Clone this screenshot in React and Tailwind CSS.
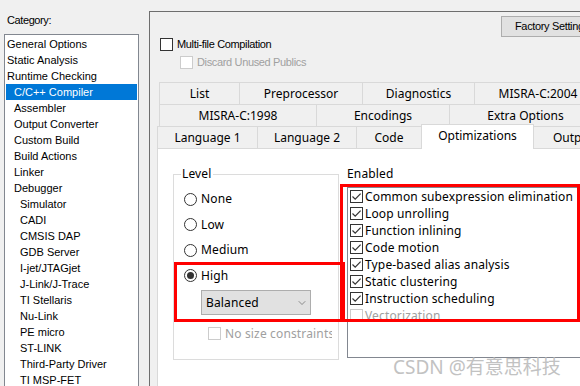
import React from "react";
import { ChevronDown } from "lucide-react";

const cats = [
  ["General Options", 0],
  ["Static Analysis", 0],
  ["Runtime Checking", 0],
  ["C/C++ Compiler", 1, true],
  ["Assembler", 1],
  ["Output Converter", 1],
  ["Custom Build", 1],
  ["Build Actions", 1],
  ["Linker", 1],
  ["Debugger", 1],
  ["Simulator", 2],
  ["CADI", 2],
  ["CMSIS DAP", 2],
  ["GDB Server", 2],
  ["I-jet/JTAGjet", 2],
  ["J-Link/J-Trace", 2],
  ["TI Stellaris", 2],
  ["Nu-Link", 2],
  ["PE micro", 2],
  ["ST-LINK", 2],
  ["Third-Party Driver", 2],
  ["TI MSP-FET", 2],
];

const indent = ["pl-[1px]", "pl-[8px]", "pl-[14px]"];

function Check({ checked, disabled }) {
  return (
    <span
      className={`w-[13px] h-[13px] border ${
        disabled ? "border-[#cccccc]" : "border-[#333333]"
      } bg-white flex items-center justify-center shrink-0`}
    >
      {checked && (
        <svg width="11" height="11" viewBox="0 0 11 11">
          <path d="M1.5 5.5 L4.2 8.2 L9.6 2.6" stroke="#333333" strokeWidth="1.2" fill="none" />
        </svg>
      )}
    </span>
  );
}

function Radio({ checked }) {
  return (
    <span className="w-[13px] h-[13px] rounded-full border border-[#333333] bg-white flex items-center justify-center shrink-0">
      {checked && <span className="w-[7px] h-[7px] rounded-full bg-[#333333]" />}
    </span>
  );
}

function Tab({ children, w, first, selected }) {
  return (
    <div
      className={`${w} shrink-0 border border-[#d9d9d9] flex items-center justify-center whitespace-nowrap ${
        first ? "" : "-ml-px"
      } ${selected ? "h-[25px] border-b-0 bg-white relative z-10 pb-[2px]" : "h-[23px] bg-[#f0f0f0]"}`}
    >
      {children}
    </div>
  );
}

const enabled = [
  ["Common subexpression elimination", true],
  ["Loop unrolling", true],
  ["Function inlining", true],
  ["Code motion", true],
  ["Type-based alias analysis", true],
  ["Static clustering", true],
  ["Instruction scheduling", true],
  ["Vectorization", false],
];

export default function App() {
  return (
    <div className="w-[580px] h-[386px] bg-[#f0f0f0] overflow-hidden relative flex text-black font-['Liberation_Sans',Arial,sans-serif]">
      {/* Left column */}
      <div className="w-[149px] shrink-0 flex flex-col">
        <div className="shrink-0 pl-[7px] pt-[13px] h-[34px] text-[11px] leading-[14px] tracking-[-0.4px]">
          Category:
        </div>
        <div className="ml-[4px] w-[135px] flex-1 border border-[#828790] bg-white pt-[1px] px-[1px] text-[11px]">
          {cats.map(([name, lvl, sel]) => (
            <div
              key={name}
              className={`h-[16px] leading-[16px] whitespace-nowrap ${indent[lvl]} ${
                sel ? "bg-[#0078d7] text-white" : ""
              }`}
            >
              {name}
            </div>
          ))}
        </div>
      </div>

      {/* Right panel */}
      <div className="w-[470px] shrink-0 mt-[11px] border-l border-t border-[#6e6e6e] flex flex-col">
        <div className="shrink-0 pl-[351px] pt-[4px] text-[11px] tracking-[-0.35px]">
          <div className="w-[100px] h-[21px] border border-[#adadad] bg-[#e1e1e1] flex items-center pl-[13px] whitespace-nowrap">
            Factory Settings
          </div>
        </div>
        <div className="shrink-0 ml-[10px] mt-[1px] h-[13px] flex items-center gap-[4px] text-[11px] tracking-[-0.35px] whitespace-nowrap">
          <Check />
          <span>Multi-file Compilation</span>
        </div>
        <div className="shrink-0 ml-[30px] mt-[5px] h-[13px] flex items-center gap-[4px] text-[11px] tracking-[-0.35px] text-[#a0a0a0] whitespace-nowrap">
          <Check disabled />
          <span>Discard Unused Publics</span>
        </div>

        {/* Tabs */}
        <div className="ml-[7px] mt-[13px] flex flex-col flex-1 font-['Noto_Sans',sans-serif] text-[12px]">
          <div className="shrink-0 ml-[2px] flex">
            <Tab w="w-[81px]" first>List</Tab>
            <Tab w="w-[124px]">Preprocessor</Tab>
            <Tab w="w-[113px]">Diagnostics</Tab>
            <Tab w="w-[128px]">MISRA-C:2004</Tab>
          </div>
          <div className="shrink-0 ml-[2px] -mt-px flex">
            <Tab w="w-[158px]" first>MISRA-C:1998</Tab>
            <Tab w="w-[134px]">Encodings</Tab>
            <Tab w="w-[153px]">Extra Options</Tab>
          </div>
          <div className="shrink-0 -mt-px flex items-end h-[23px]">
            <Tab w="w-[101px]" first>Language 1</Tab>
            <Tab w="w-[100px]">Language 2</Tab>
            <Tab w="w-[66px]">Code</Tab>
            <Tab w="w-[113px]" selected>Optimizations</Tab>
            <Tab w="w-[80px]">Output</Tab>
          </div>

          {/* Content */}
          <div className="-mt-px flex-1 bg-white border-l border-t border-[#d9d9d9] flex pl-[15px] pt-[17px] gap-[8px] tracking-[0.15px]">
            <fieldset className="w-[166px] h-[194px] border border-[#dcdcdc] pl-[10px] pt-[4px] shrink-0">
              <legend className="-ml-[3px] px-[1px] leading-[16px]">Level</legend>
              <div className="flex flex-col">
                <div className="h-[26px] flex items-center gap-[4px]">
                  <Radio />
                  <span>None</span>
                </div>
                <div className="h-[25px] flex items-center gap-[4px]">
                  <Radio />
                  <span>Low</span>
                </div>
                <div className="h-[26px] flex items-center gap-[4px]">
                  <Radio />
                  <span>Medium</span>
                </div>
                <div className="h-[25px] flex items-center gap-[4px]">
                  <Radio checked />
                  <span>High</span>
                </div>
                <div className="ml-[17px] mt-[2px] w-[110px] h-[25px] border border-[#adadad] bg-[#e1e1e1] flex items-center justify-between pl-[4px] pr-[2px]">
                  <span>Balanced</span>
                  <ChevronDown size={12} strokeWidth={1} color="#333333" />
                </div>
                <div className="ml-[24px] mt-[12px] w-[124px] h-[13px] flex items-center gap-[4px] overflow-hidden whitespace-nowrap text-[#a0a0a0]">
                  <Check disabled />
                  <span>No size constraints</span>
                </div>
              </div>
            </fieldset>

            <div className="flex flex-col shrink-0">
              <div className="leading-[16px]">Enabled</div>
              <div className="mt-[5px] w-[240px] h-[171px] border border-[#828790] pl-[2px]">
                {enabled.map(([t, on]) => (
                  <div
                    key={t}
                    className={`h-[17px] flex items-center gap-[2px] whitespace-nowrap ${
                      on ? "" : "text-[#a0a0a0]"
                    }`}
                  >
                    <Check checked={on} disabled={!on} />
                    <span>{t}</span>
                  </div>
                ))}
              </div>
            </div>
          </div>
        </div>
      </div>

      {/* Red annotation boxes */}
      <div className="absolute left-[174px] top-[262px] w-[171px] h-[60px] border-[3px] border-[#ff0000] pointer-events-none" />
      <div className="absolute left-[340px] top-[184px] w-[240px] h-[138px] border-[3px] border-[#ff0000] pointer-events-none" />

      {/* Watermark */}
      <div className="absolute left-[393px] top-[354px] text-[19px] leading-[26px] text-[#c2c2c2] whitespace-nowrap font-['Noto_Sans','Noto_Sans_CJK_SC',sans-serif]">
        CSDN @有意思科技
      </div>
    </div>
  );
}
